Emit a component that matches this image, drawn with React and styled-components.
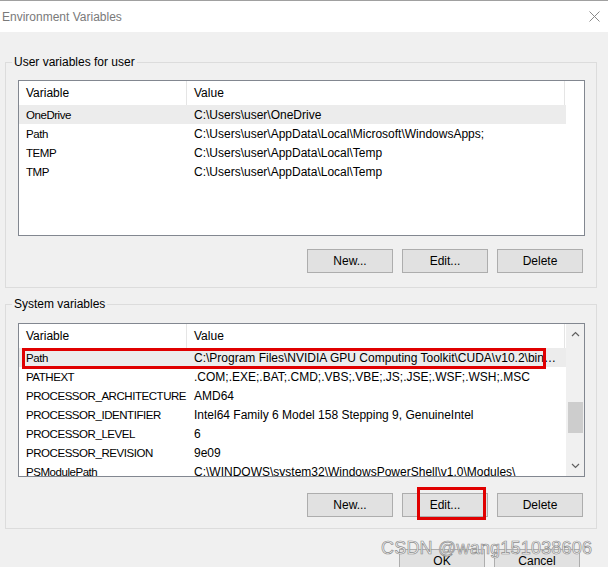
import styled, { createGlobalStyle } from "styled-components"

const GlobalStyle = createGlobalStyle`
  html, body {
    margin: 0;
    padding: 0;
    background: #f0f0f0;
  }
  * {
    box-sizing: border-box;
  }
`

const Window = styled.div`
  position: relative;
  width: 608px;
  height: 567px;
  overflow: hidden;
  background: #f0f0f0;
  font-family: "Liberation Sans", "DejaVu Sans", sans-serif;
  font-size: 12px;
  color: #000;
`

const TitleBar = styled.div`
  height: 32px;
  background: #fff;
  border-top: 1px solid #a0a0a0;
  display: flex;
  align-items: center;
  justify-content: space-between;
  padding: 0 8px 0 2px;
`

const Title = styled.span`
  color: #7a7a7a;
  font-size: 12px;
`

const Body = styled.div`
  padding: 23px 11px 0 5px;
  display: flex;
  flex-direction: column;
  gap: 9px;
`

const Group = styled.fieldset`
  margin: 0;
  border: 1px solid #dcdcdc;
  padding: ${(p) => p.$padTop}px 12px ${(p) => p.$padBottom}px 12px;
  min-width: 0;
`

const Legend = styled.legend`
  padding: 0 2px;
  margin-left: -6px;
  line-height: 15px;
  font-size: 12px;
`

const List = styled.div`
  width: 567px;
  height: ${(p) => p.$height}px;
  background: #fff;
  border: 1px solid #828790;
  display: flex;
  overflow: hidden;
`

const Columns = styled.div`
  width: 547px;
  display: flex;
  flex-direction: column;
`

const Header = styled.div`
  display: grid;
  grid-template-columns: 168px 378px;
  height: 24px;
  flex-shrink: 0;
`

const HeaderCell = styled.div`
  padding-left: 7px;
  display: flex;
  align-items: center;
  border-right: 1px solid #e5e5e5;
`

const Row = styled.div`
  display: grid;
  grid-template-columns: 168px 378px;
  height: 19px;
  flex-shrink: 0;
  align-items: center;
  position: relative;
  background: ${(p) => (p.$selected ? "#ececec" : "transparent")};
`

const NameCell = styled.div`
  padding-left: 7px;
  white-space: nowrap;
  font-size: 11.5px;
  letter-spacing: -0.45px;
`

const ValueCell = styled.div`
  padding-left: 7px;
  padding-right: 8px;
  white-space: nowrap;
  overflow: hidden;
  text-overflow: ellipsis;
`

const Marker = styled.div`
  position: absolute;
  left: 3px;
  top: 0;
  width: 524px;
  height: 21px;
  border: 3px solid #e00000;
  pointer-events: none;
`

const ScrollBar = styled.div`
  width: 18px;
  background: #f0f0f0;
  display: flex;
  flex-direction: column;
  align-items: center;
`

const ArrowBox = styled.div`
  height: 20px;
  width: 17px;
  display: flex;
  align-items: center;
  justify-content: center;
`

const Track = styled.div`
  flex: 1;
  width: 100%;
  padding-top: ${(p) => p.$offset}px;
  display: flex;
  justify-content: center;
`

const Thumb = styled.div`
  width: 15px;
  height: 31px;
  background: #cdcdcd;
`

const ButtonRow = styled.div`
  margin-top: ${(p) => p.$gap}px;
  padding-right: 1px;
  display: flex;
  justify-content: flex-end;
  gap: 9px;
`

const Button = styled.button`
  position: relative;
  width: 86px;
  height: 24px;
  background: #e1e1e1;
  border: 1px solid #adadad;
  font-family: inherit;
  font-size: 12px;
  color: #000;
  padding: 0;
`

const ButtonMarker = styled.div`
  position: absolute;
  left: 14px;
  top: -7px;
  width: 69px;
  height: 33px;
  border: 3px solid #e00000;
`

const Footer = styled.div`
  margin-top: 20px;
  padding-right: 28px;
  display: flex;
  justify-content: flex-end;
  gap: 9px;
`

const Watermark = styled.div`
  position: absolute;
  left: 381px;
  top: 538px;
  font-family: "Liberation Sans", "DejaVu Sans", sans-serif;
  font-size: 18px;
  color: rgba(255, 255, 255, 0.85);
  -webkit-text-stroke: 0.7px #8c8c8c;
  white-space: nowrap;
  letter-spacing: 0.2px;
`

const Chevron = ({ up }) => (
  <svg width="9" height="6" viewBox="0 0 9 6">
    <path
      d={up ? "M1 5 L4.5 1.5 L8 5" : "M1 1 L4.5 4.5 L8 1"}
      fill="none"
      stroke="#606060"
      strokeWidth="1.2"
    />
  </svg>
)

const CloseIcon = () => (
  <svg width="11" height="11" viewBox="0 0 11 11">
    <path d="M0.5 0.5 L10.5 10.5 M10.5 0.5 L0.5 10.5" stroke="#8a8a8a" strokeWidth="1" />
  </svg>
)

const userVars = [
  ["OneDrive", "C:\\Users\\user\\OneDrive"],
  ["Path", "C:\\Users\\user\\AppData\\Local\\Microsoft\\WindowsApps;"],
  ["TEMP", "C:\\Users\\user\\AppData\\Local\\Temp"],
  ["TMP", "C:\\Users\\user\\AppData\\Local\\Temp"],
]

const systemVars = [
  ["Path", "C:\\Program Files\\NVIDIA GPU Computing Toolkit\\CUDA\\v10.2\\bin;C:\\Program Files"],
  ["PATHEXT", ".COM;.EXE;.BAT;.CMD;.VBS;.VBE;.JS;.JSE;.WSF;.WSH;.MSC"],
  ["PROCESSOR_ARCHITECTURE", "AMD64"],
  ["PROCESSOR_IDENTIFIER", "Intel64 Family 6 Model 158 Stepping 9, GenuineIntel"],
  ["PROCESSOR_LEVEL", "6"],
  ["PROCESSOR_REVISION", "9e09"],
  ["PSModulePath", "C:\\WINDOWS\\system32\\WindowsPowerShell\\v1.0\\Modules\\"],
]

const VarList = ({ rows, height, selected, marked, scroll }) => (
  <List $height={height}>
    <Columns>
      <Header>
        <HeaderCell>Variable</HeaderCell>
        <HeaderCell>Value</HeaderCell>
      </Header>
      {rows.map(([name, value], i) => (
        <Row key={name + i} $selected={i === selected}>
          <NameCell>{name}</NameCell>
          <ValueCell>{value}</ValueCell>
          {i === marked && <Marker />}
        </Row>
      ))}
    </Columns>
    {scroll && (
      <ScrollBar>
        <ArrowBox>
          <Chevron up />
        </ArrowBox>
        <Track $offset={58}>
          <Thumb />
        </Track>
        <ArrowBox>
          <Chevron />
        </ArrowBox>
      </ScrollBar>
    )}
  </List>
)

const App = () => {
  return (
    <Window>
      <GlobalStyle />
      <TitleBar>
        <Title>Environment Variables</Title>
        <CloseIcon />
      </TitleBar>
      <Body>
        <Group $padTop={10} $padBottom={14}>
          <Legend>User variables for user</Legend>
          <VarList rows={userVars} height={156} selected={0} />
          <ButtonRow $gap={13}>
            <Button>New...</Button>
            <Button>Edit...</Button>
            <Button>Delete</Button>
          </ButtonRow>
        </Group>
        <Group $padTop={11} $padBottom={11}>
          <Legend>System variables</Legend>
          <VarList rows={systemVars} height={154} selected={0} marked={0} scroll />
          <ButtonRow $gap={16}>
            <Button>New...</Button>
            <Button>
              Edit...
              <ButtonMarker />
            </Button>
            <Button>Delete</Button>
          </ButtonRow>
        </Group>
      </Body>
      <Footer>
        <Button>OK</Button>
        <Button>Cancel</Button>
      </Footer>
      <Watermark>CSDN @wang151038606</Watermark>
    </Window>
  )
}

export default App
